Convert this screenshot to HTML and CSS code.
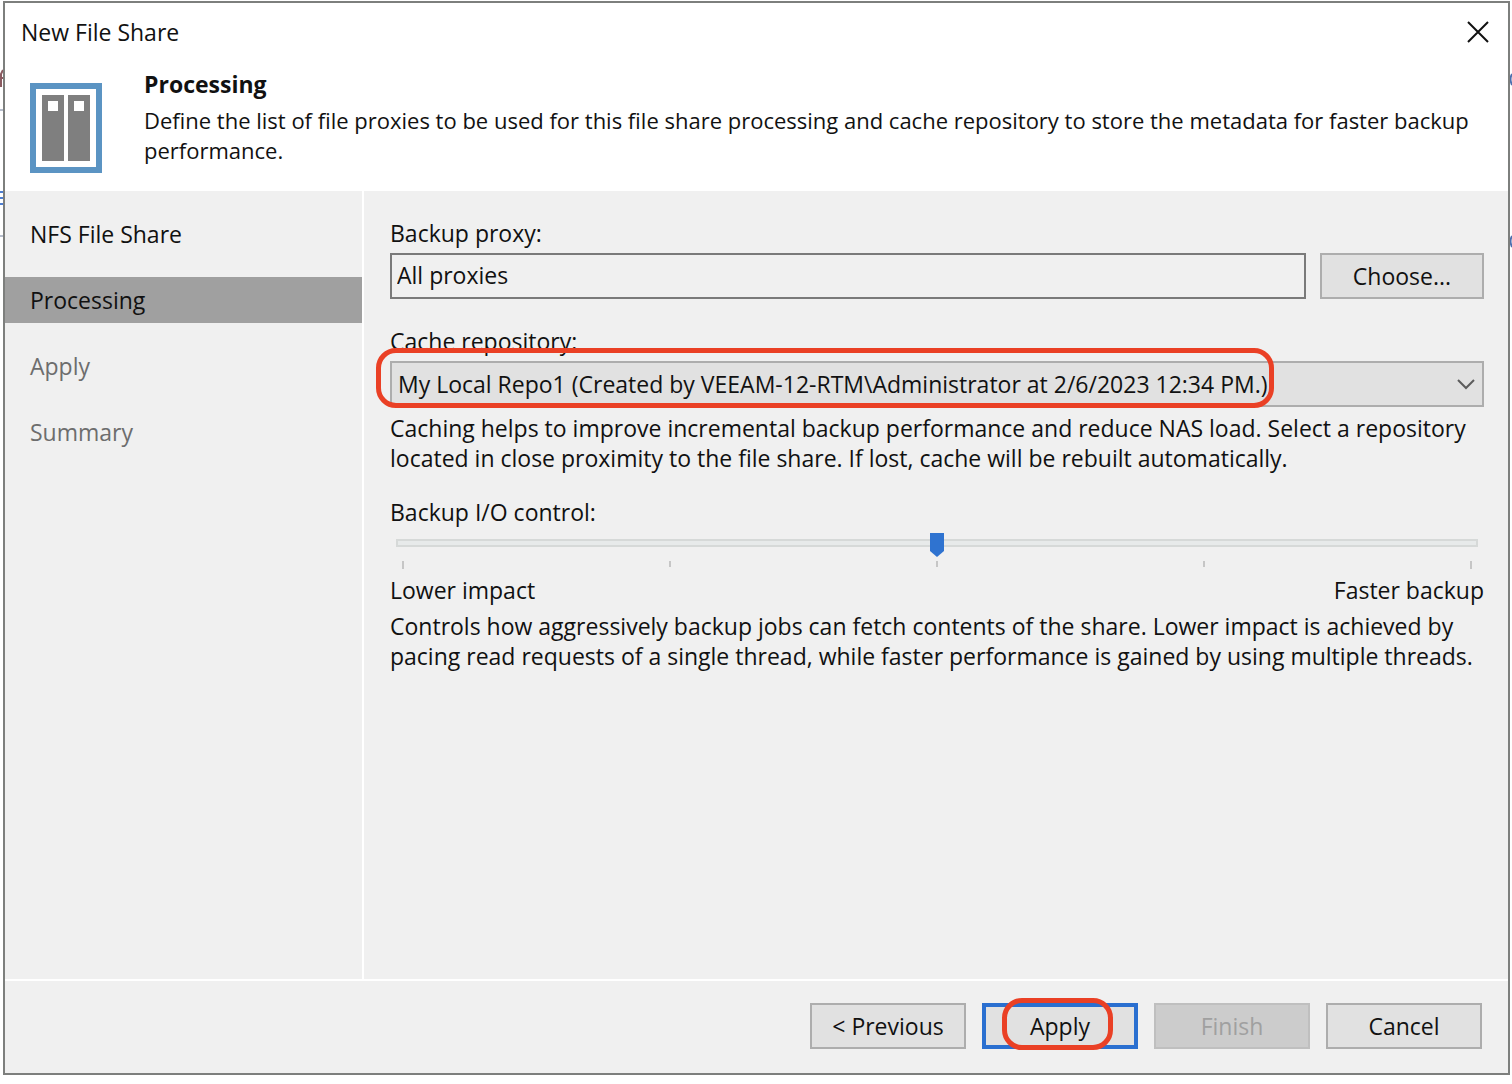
FILE: index.html
```html
<!DOCTYPE html>
<html lang="en">
<head>
<meta charset="utf-8">
<meta name="viewport" content="width=device-width, initial-scale=1">
<title>New File Share</title>
<link rel="stylesheet" href="styles.css">
</head>
<body>
<svg class="behind behind-left" viewBox="0 0 3 180" aria-hidden="true">
  <path d="M0 10H3M1 19V6L3 2" fill="none" stroke="#8a5a60" stroke-width="2"/>
  <path d="M0 42H3M0 168H3" stroke="#6f7c98"/>
  <path d="M0 124H3M0 130H3M0 136H3" stroke="#4d7ed0" stroke-width="2"/>
</svg>
<svg class="behind behind-right" viewBox="0 0 3 180" aria-hidden="true">
  <path d="M3 6Q0 11 3 17M3 168Q0 173 3 179" fill="none" stroke="#4d6fae" stroke-width="2"/>
</svg>
<div class="window" role="dialog" aria-labelledby="window-title">
  <header class="banner">
    <div class="titlebar">
      <span id="window-title">New File Share</span>
      <button class="close" type="button" aria-label="Close">
        <svg width="22" height="22" viewBox="0 0 22 22" aria-hidden="true"><path d="M1 1L21 21M21 1L1 21" stroke="#111" stroke-width="2"/></svg>
      </button>
    </div>
    <div class="intro">
      <svg class="share-icon" width="72" height="90" viewBox="0 0 72 90" aria-hidden="true">
        <path d="M3 3H69V87H3Z" fill="#fff" stroke="#5b94c3" stroke-width="6"/>
        <path d="M12 12H34V78H12ZM38 12H60V78H38Z" fill="#7f7f7f"/>
        <path d="M18 18H28V28H18ZM44 18H54V28H44Z" fill="#fff"/>
      </svg>
      <div class="intro-text">
        <h1>Processing</h1>
        <p>Define the list of file proxies to be used for this file share processing and cache repository to store the metadata for faster backup performance.</p>
      </div>
    </div>
  </header>
  <div class="content">
    <nav class="steps" aria-label="Steps">
      <a href="#share">NFS File Share</a>
      <a class="current" href="#processing" aria-current="step">Processing</a>
      <a class="pending" href="#apply">Apply</a>
      <a class="pending" href="#summary">Summary</a>
    </nav>
    <main class="panel">
      <div class="field">
        <label for="proxy">Backup proxy:</label>
        <div class="proxy-row">
          <input id="proxy" class="proxy" type="text" value="All proxies" readonly>
          <button class="button choose" type="button">Choose...</button>
        </div>
      </div>
      <div class="field repository">
        <label for="repo">Cache repository:</label>
        <div class="select-wrap">
          <select id="repo">
            <option>My Local Repo1 (Created by VEEAM-12-RTM\Administrator at 2/6/2023 12:34 PM.)</option>
          </select>
          <svg class="chevron" width="18" height="11" viewBox="0 0 18 11" aria-hidden="true"><path d="M1 1L9 9L17 1" fill="none" stroke="#5c5c5c" stroke-width="2"/></svg>
          <span class="mark mark-repo"></span>
        </div>
      </div>
      <p class="hint">Caching helps to improve incremental backup performance and reduce NAS load. Select a repository<br>located in close proximity to the file share. If lost, cache will be rebuilt automatically.</p>
      <div class="control">
        <label for="io">Backup I/O control:</label>
        <input id="io" class="slider" type="range" min="0" max="4" value="2">
        <div class="ticks" aria-hidden="true"><i></i><i></i><i></i><i></i><i></i></div>
        <div class="ends"><span>Lower impact</span><span>Faster backup</span></div>
      </div>
      <p class="hint">Controls how aggressively backup jobs can fetch contents of the share. Lower impact is achieved by<br>pacing read requests of a single thread, while faster performance is gained by using multiple threads.</p>
    </main>
  </div>
  <footer class="actions">
    <button class="button" type="button">&lt; Previous</button>
    <span class="apply-wrap">
      <button class="button primary" type="button">Apply</button>
      <span class="mark mark-apply"></span>
    </span>
    <button class="button" type="button" disabled>Finish</button>
    <button class="button" type="button">Cancel</button>
  </footer>
</div>
</body>
</html>
```
FILE: styles.css
```css
* { box-sizing: border-box; }

body {
  margin: 0;
  min-height: 100vh;
  padding: 1px 2px 9px 3px;
  display: flex;
  position: relative;
  background: #fff;
  color: #111;
  font: 23px/30px "Open Sans", "Noto Sans", sans-serif;
}

h1, p { margin: 0; font-size: inherit; }

button, input, select { font: inherit; color: inherit; }

.behind { position: absolute; top: 68px; width: 3px; height: 180px; }
.behind-left { left: 0; }
.behind-right { right: 0; }

.window {
  flex: 1;
  min-width: 0;
  display: flex;
  flex-direction: column;
  position: relative;
  border: 2px solid #7d7f7d;
  background: #f0f0f0;
}

.banner { background: #fff; padding-bottom: 18px; }

.titlebar {
  display: flex;
  align-items: center;
  justify-content: space-between;
  height: 58px;
  padding: 0 19px 0 16px;
}

.close {
  display: flex;
  padding: 0;
  border: 0;
  background: none;
}

.intro {
  display: flex;
  align-items: flex-end;
  gap: 42px;
  padding: 8px 15px 0 25px;
}

.share-icon { flex: none; }

.intro-text { flex: 1; margin-bottom: 8px; }
.intro-text p { font-size: 22px; }
.intro-text h1 { margin-bottom: 6px; }

.content {
  flex: 1;
  display: flex;
  border-bottom: 2px solid #fff;
}

.steps {
  flex: 0 0 359px;
  display: flex;
  flex-direction: column;
  gap: 20px;
  padding-top: 20px;
  border-right: 2px solid #fff;
}

.steps a {
  padding: 8px 25px;
  color: #111;
  text-decoration: none;
}

.steps .current { background: #a0a0a0; }
.steps .pending { color: #6d6d6d; }

.panel { flex: 1; min-width: 0; padding: 27px 24px 0 26px; }

label { display: block; }

.field label { margin-bottom: 5px; }

.proxy-row { display: flex; gap: 14px; }

.proxy {
  flex: 1;
  min-width: 0;
  height: 46px;
  padding: 0 5px 2px;
  border: 2px solid #7a7a7a;
  background: #f0f0f0;
}

.button {
  width: 156px;
  height: 46px;
  padding: 0;
  border: 2px solid #adadad;
  background: #e1e1e1;
}

.button.choose { width: 164px; }

.button:disabled {
  border-color: #bfbfbf;
  background: #ccc;
  color: #a0a0a0;
}

.button.primary { border: 4px solid #2a6fd0; }

.repository { margin-top: 27px; }

.select-wrap { position: relative; }

.select-wrap select {
  display: block;
  width: 100%;
  height: 46px;
  padding: 0 40px 0 6px;
  border: 2px solid #adadad;
  border-radius: 0;
  background: #e1e1e1;
  appearance: none;
}

.chevron { position: absolute; right: 9px; top: 18px; }

.mark {
  position: absolute;
  border: 5px solid #ea4025;
  border-radius: 20px;
  pointer-events: none;
}

.mark-repo { inset: -13px 210px -1px -14px; }
.mark-apply { inset: -5px 25px -1px 20px; }

.hint { margin-top: 6px; }

.control { margin-top: 24px; }

.slider {
  display: block;
  width: calc(100% - 12px);
  height: 24px;
  margin: 4px 6px 6px;
  background: none;
  appearance: none;
}

.slider::-webkit-slider-runnable-track {
  height: 8px;
  border: 2px solid #d6d9d8;
  background: #e7eaea;
}

.slider::-webkit-slider-thumb {
  width: 14px;
  height: 24px;
  margin-top: -8px;
  background: #2f73d0;
  clip-path: polygon(0 0, 100% 0, 100% 75%, 50% 100%, 0 75%);
  appearance: none;
}

.ticks {
  display: flex;
  justify-content: space-between;
  height: 14px;
  padding: 0 12px;
}

.ticks i { width: 2px; height: 6px; background: #c6c6c6; }
.ticks i:first-child, .ticks i:last-child { height: 8px; }

.ends { display: flex; justify-content: space-between; }

.actions {
  display: flex;
  justify-content: flex-end;
  gap: 16px;
  padding: 22px 26px 24px;
}

.apply-wrap { position: relative; display: flex; }
```
